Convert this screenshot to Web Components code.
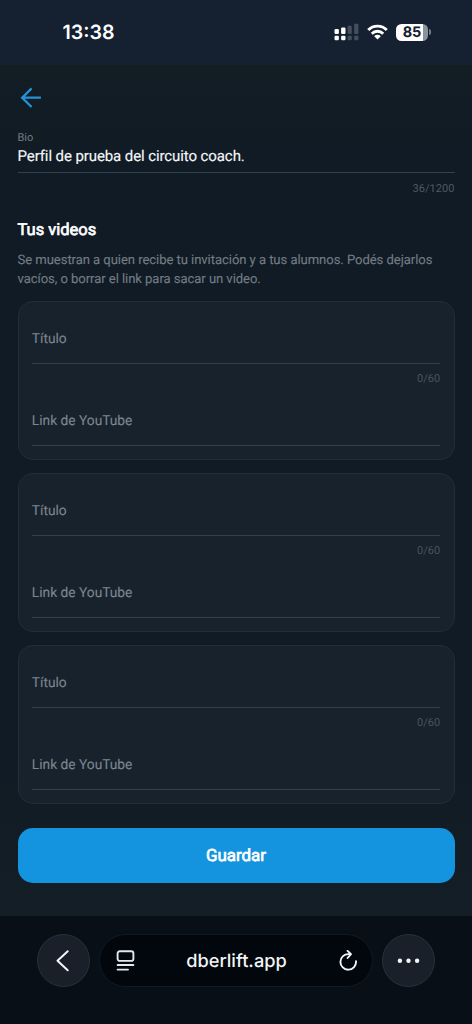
<!DOCTYPE html>
<html lang="es">
<head>
<meta charset="utf-8">
<meta name="viewport" content="width=device-width">
<title>dberlift.app</title>
<style>
html,body{margin:0;height:100%;background:#111c25}
body{overflow:hidden;font-family:Roboto,"Liberation Sans",sans-serif;text-rendering:geometricPrecision}
</style>
</head>
<body>
<phone-screen>
  <status-bar slot="top" time="13:38" battery="85"></status-bar>
  <back-arrow></back-arrow>
  <bio-field label="Bio" counter="36/1200">Perfil de prueba del circuito coach.</bio-field>
  <section-intro>
    <span slot="title">Tus videos</span>
    Se muestran a quien recibe tu invitación y a tus alumnos. Podés dejarlos<br>vacíos, o borrar el link para sacar un video.
  </section-intro>
  <video-card></video-card>
  <video-card></video-card>
  <video-card></video-card>
  <primary-button>Guardar</primary-button>
  <browser-bar slot="bottom">dberlift.app</browser-bar>
</phone-screen>
<script>
const define = (name, html) => {
  const tpl = document.createElement('template');
  tpl.innerHTML = html;
  customElements.define(name, class extends HTMLElement {
    constructor() {
      super();
      this.attachShadow({ mode: 'open' }).append(tpl.content.cloneNode(true));
    }
    connectedCallback() {
      for (const el of this.shadowRoot.querySelectorAll('[data-attr]'))
        el.textContent = this.getAttribute(el.dataset.attr) || '';
    }
  });
};

define('phone-screen', `
<style>
:host{display:flex;flex-direction:column;width:472px;height:1024px;background:#111c25}
main{flex:1;display:flex;flex-direction:column;padding:22px 17.5px 0;background:linear-gradient(#121d24,#101b25 12%,#101b25 80%,#131e26)}
</style>
<slot name="top"></slot><main><slot></slot></main><slot name="bottom"></slot>`);

define('status-bar', `
<style>
:host{display:flex;box-sizing:border-box;height:65px;background:#152030;color:#fff;padding:0 41px 0 62.5px;align-items:center;justify-content:space-between;font-family:Inter,sans-serif}
.time{font-size:19.6px;font-weight:600;line-height:24px;margin-bottom:2px}
.right{display:flex;align-items:center;gap:8px;margin-bottom:1px}
svg{display:block}
.batt{display:flex;align-items:center;gap:1px}
.cell{width:32px;height:17px;border-radius:5.5px;background:linear-gradient(90deg,#fff 84%,#8c939b 84%);color:#152030;font-size:14.5px;font-weight:700;line-height:17.5px;text-align:center}
.nub{width:2px;height:6px;border-radius:0 2px 2px 0;background:#737b86}
</style>
<span class="time" data-attr="time"></span>
<div class="right">
<svg width="25" height="18" viewBox="0 0 25 18"><g fill="#fff"><rect x="0.5" y="6" width="4.4" height="5" rx="1.2"/><rect x="7.1" y="4.5" width="4.4" height="6.5" rx="1.2"/><rect x="0.5" y="12.8" width="4.4" height="4.4" rx="1.2"/><rect x="7.1" y="12.8" width="4.4" height="4.4" rx="1.2"/></g><g fill="#454e5c"><rect x="13.6" y="2.8" width="4.2" height="8.2" rx="1.2"/><rect x="20.2" y="0.8" width="4.2" height="10.2" rx="1.2"/><rect x="13.6" y="12.8" width="4.2" height="4.4" rx="1.2"/><rect x="20.2" y="12.8" width="4.2" height="4.4" rx="1.2"/></g></svg>
<svg width="21" height="16" viewBox="0 0 21 16" fill="none" stroke="#fff" stroke-width="2.9"><path d="M1.2 6A13.2 13.2 0 0 1 19.8 6"/><path d="M4.8 9.7A8 8 0 0 1 16.2 9.7"/><path d="M7.2 12.2A4.7 4.7 0 0 1 13.8 12.2L10.5 15.6Z" fill="#fff" stroke="none"/></svg>
<div class="batt"><div class="cell" data-attr="battery"></div><div class="nub"></div></div>
</div>`);

define('back-arrow', `
<style>:host{display:block;height:21px;padding-left:2.5px}svg{display:block}</style>
<svg width="21" height="21" viewBox="0 0 21 21" fill="none" stroke="#2492d6" stroke-width="2.3"><path d="M20.9 10.7H2.2M11.6 1.4L2.2 10.7L11.6 20"/></svg>`);

define('bio-field', `
<style>
:host{display:block;margin-top:22.5px}
.label{font-size:11px;line-height:14px;color:#737c85}
.value{font-size:15px;line-height:20px;margin-top:1px;color:#f4f6f8;letter-spacing:-.095px;-webkit-text-stroke:.15px}
.line{height:1px;margin-top:6.5px;background:#36424b}
.count{font-size:11px;line-height:14px;margin-top:9px;text-align:right;color:#4f5961;letter-spacing:.05px}
</style>
<div class="label" data-attr="label"></div><div class="value"><slot></slot></div><div class="line"></div><div class="count" data-attr="counter"></div>`);

define('section-intro', `
<style>
:host{display:block;margin-top:25px;font-size:13.1px;line-height:18.7px;color:#727b84;white-space:nowrap;letter-spacing:-.07px}
h2{margin:0 0 11px;font-size:16.5px;line-height:20px;font-weight:400;-webkit-text-stroke:.7px #fff;color:#fff;letter-spacing:0}
p{margin:0 0 -1px;-webkit-text-stroke:.12px}
</style>
<h2><slot name="title"></slot></h2><p><slot></slot></p>`);

define('line-field', `
<style>
:host{display:block;font-size:13.75px;color:#7c858f;-webkit-text-stroke:.12px}
.box{height:49px;line-height:48px;border-bottom:1px solid #33404b;box-sizing:border-box}
</style>
<div class="box"><slot></slot></div>`);

define('video-card', `
<style>
:host{display:block;box-sizing:border-box;height:159px;margin-top:13px;padding:13px 13.3px 0;background:#17222d;border:1.1px solid #212d38;border-radius:15px}
.count{font-size:11px;line-height:14px;margin-top:8px;height:24px;padding-bottom:1px;box-sizing:content-box;text-align:right;color:#49535e;letter-spacing:.05px}
</style>
<line-field>Título</line-field><div class="count">0/60</div><line-field>Link de YouTube</line-field>`);

define('primary-button', `
<style>
:host{display:block;margin-top:24px}
button{display:block;width:100%;height:55px;padding:0;border:0;border-radius:15px;background:#1493de;color:#fff;font:400 16.9px Roboto,sans-serif;-webkit-text-stroke:.7px #fff;text-rendering:inherit}
</style>
<button><slot></slot></button>`);

define('browser-bar', `
<style>
:host{display:flex;box-sizing:border-box;height:108px;padding:18px 37px 0;background:#090f17;gap:9px;color:#f3f5f7;font:500 18.2px Inter,sans-serif}
.round,.pill{box-sizing:border-box;height:53px;border-radius:27px;display:flex;align-items:center;border:1px solid #26323c}
.round{width:53px;flex:none;justify-content:center;background:#19202a}
.pill{flex:1;background:#02070d;border-color:#101b24;padding:0 13.5px 0 15.5px;justify-content:space-between}
svg{display:block}
span{line-height:24px}
</style>
<div class="round"><svg width="24" height="24" viewBox="0 0 24 24" fill="none" stroke="#f3f5f7" stroke-width="2" stroke-linecap="round" stroke-linejoin="round"><path d="M15.7 2.2L5.5 11.7L15.7 21.2"/></svg></div>
<div class="pill">
<svg width="19" height="22" viewBox="0 0 19 22" fill="none" stroke="#e6e9ec" stroke-width="1.9" stroke-linecap="round"><rect x="1.6" y="1.3" width="15.8" height="9.6" rx="2.2"/><path d="M1.6 15H17.4M1.6 19.6H12"/></svg>
<span><slot></slot></span>
<svg width="20" height="22" viewBox="0 0 20 22" fill="none" stroke="#f3f5f7" stroke-width="1.9" stroke-linecap="round" stroke-linejoin="round"><path d="M12.8 4.1H10.8A7.8 7.8 0 1 0 18 11.2M9.6 .9L13 4.1L9.6 8"/></svg>
</div>
<div class="round"><svg width="24" height="6" viewBox="0 0 24 6" fill="#f3f5f7"><circle cx="2.9" cy="2.8" r="2.2"/><circle cx="11.5" cy="2.8" r="2.2"/><circle cx="20.1" cy="2.8" r="2.2"/></svg></div>`);
</script>
</body>
</html>
